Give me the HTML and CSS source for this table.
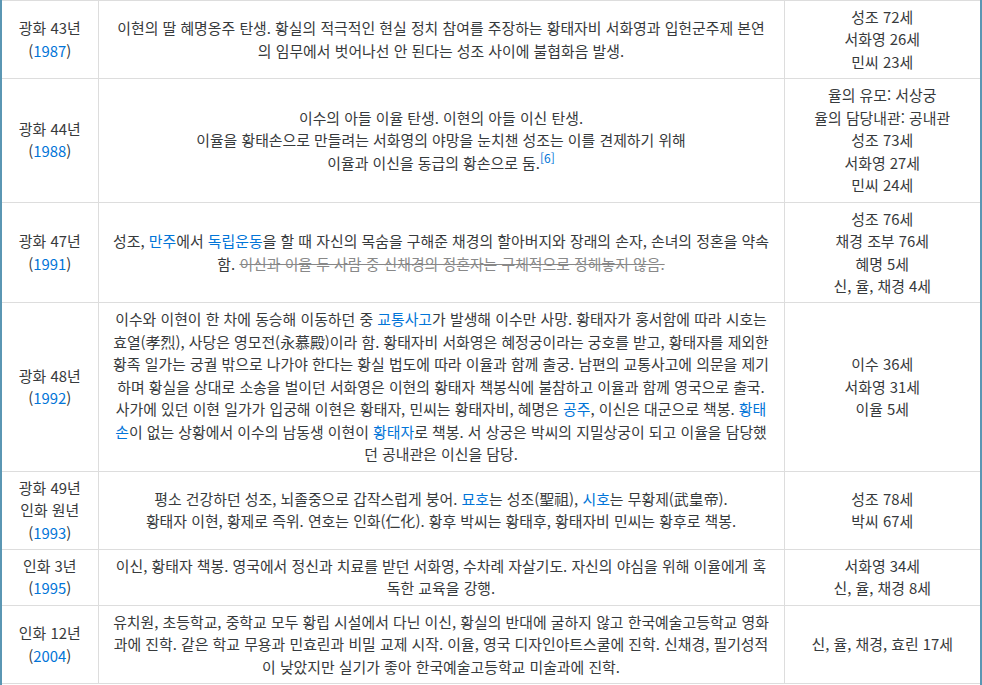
FILE: index.html
```html
<!DOCTYPE html>
<html lang="ko">
<head>
<meta charset="utf-8">
<link rel="stylesheet" href="styles.css">
</head>
<body>
<div class="frame">
<table class="timeline">
<colgroup><col class="c-year"><col class="c-event"><col class="c-age"></colgroup>
<tbody>
<tr>
<td>광화 43년<br>(<a>1987</a>)</td>
<td class="event">이현의 딸 혜명옹주 탄생. 황실의 적극적인 현실 정치 참여를 주장하는 황태자비 서화영과 입헌군주제 본연<br>의 임무에서 벗어나선 안 된다는 성조 사이에 불협화음 발생.</td>
<td>성조 72세<br>서화영 26세<br>민씨 23세</td>
</tr>
<tr>
<td>광화 44년<br>(<a>1988</a>)</td>
<td class="event">이수의 아들 이율 탄생. 이현의 아들 이신 탄생.<br>이율을 황태손으로 만들려는 서화영의 야망을 눈치챈 성조는 이를 견제하기 위해<br>이율과 이신을 동급의 황손으로 둠.<sup><a>[6]</a></sup></td>
<td>율의 유모: 서상궁<br>율의 담당내관: 공내관<br>성조 73세<br>서화영 27세<br>민씨 24세</td>
</tr>
<tr>
<td>광화 47년<br>(<a>1991</a>)</td>
<td class="event">성조, <a>만주</a>에서 <a>독립운동</a>을 할 때 자신의 목숨을 구해준 채경의 할아버지와 장래의 손자, 손녀의 정혼을 약속<br>함. <del>이신과 이율 두 사람 중 신채경의 정혼자는 구체적으로 정해놓지 않음.</del></td>
<td>성조 76세<br>채경 조부 76세<br>혜명 5세<br>신, 율, 채경 4세</td>
</tr>
<tr>
<td>광화 48년<br>(<a>1992</a>)</td>
<td class="event">이수와 이현이 한 차에 동승해 이동하던 중 <a>교통사고</a>가 발생해 이수만 사망. 황태자가 훙서함에 따라 시호는<br>효열(孝烈), 사당은 영모전(永慕殿)이라 함. 황태자비 서화영은 혜정궁이라는 궁호를 받고, 황태자를 제외한<br>황족 일가는 궁궐 밖으로 나가야 한다는 황실 법도에 따라 이율과 함께 출궁. 남편의 교통사고에 의문을 제기<br>하며 황실을 상대로 소송을 벌이던 서화영은 이현의 황태자 책봉식에 불참하고 이율과 함께 영국으로 출국.<br>사가에 있던 이현 일가가 입궁해 이현은 황태자, 민씨는 황태자비, 혜명은 <a>공주</a>, 이신은 대군으로 책봉. <a>황태<br>손</a>이 없는 상황에서 이수의 남동생 이현이 <a>황태자</a>로 책봉. 서 상궁은 박씨의 지밀상궁이 되고 이율을 담당했<br>던 공내관은 이신을 담당.</td>
<td>이수 36세<br>서화영 31세<br>이율 5세</td>
</tr>
<tr>
<td>광화 49년<br>인화 원년<br>(<a>1993</a>)</td>
<td class="event">평소 건강하던 성조, 뇌졸중으로 갑작스럽게 붕어. <a>묘호</a>는 성조(聖祖), <a>시호</a>는 무황제(武皇帝).<br>황태자 이현, 황제로 즉위. 연호는 인화(仁化). 황후 박씨는 황태후, 황태자비 민씨는 황후로 책봉.</td>
<td>성조 78세<br>박씨 67세</td>
</tr>
<tr>
<td>인화 3년<br>(<a>1995</a>)</td>
<td class="event">이신, 황태자 책봉. 영국에서 정신과 치료를 받던 서화영, 수차례 자살기도. 자신의 야심을 위해 이율에게 혹<br>독한 교육을 강행.</td>
<td>서화영 34세<br>신, 율, 채경 8세</td>
</tr>
<tr>
<td>인화 12년<br>(<a>2004</a>)</td>
<td class="event">유치원, 초등학교, 중학교 모두 황립 시설에서 다닌 이신, 황실의 반대에 굴하지 않고 한국예술고등학교 영화<br>과에 진학. 같은 학교 무용과 민효린과 비밀 교제 시작. 이율, 영국 디자인아트스쿨에 진학. 신채경, 필기성적<br>이 낮았지만 실기가 좋아 한국예술고등학교 미술과에 진학.</td>
<td>신, 율, 채경, 효린 17세</td>
</tr>
</tbody>
</table>
</div>
</body>
</html>
```

FILE: styles.css
```css
html, body {
  margin: 0;
  padding: 0;
  background: #fff;
}
.frame {
  width: 978px;
  border-left: 2px solid #5a96b3;
  border-right: 2px solid #5a96b3;
  height: 685px;
  overflow: hidden;
}
.timeline {
  width: 978px;
  border-collapse: collapse;
  table-layout: fixed;
  font-family: "Noto Sans CJK KR", "Noto Sans", sans-serif;
  font-size: 14.9px;
  line-height: 22.45px;
  color: #373a3c;
}
.c-year { width: 96px; }
.c-event { width: 686px; }
.c-age { width: 196px; }
.timeline td {
  border: 1px solid #dddddd;
  padding: 5px 8px;
  text-align: center;
  vertical-align: middle;
}
.timeline td.event {
  white-space: nowrap;
}
.timeline td:first-child { border-left: none; }
.timeline td:last-child { border-right: none; }
.timeline a {
  color: #0275d8;
  text-decoration: none;
}
.timeline del {
  color: #888;
}
.timeline sup {
  font-size: 12px;
  line-height: 0;
  vertical-align: 6px;
}
```
